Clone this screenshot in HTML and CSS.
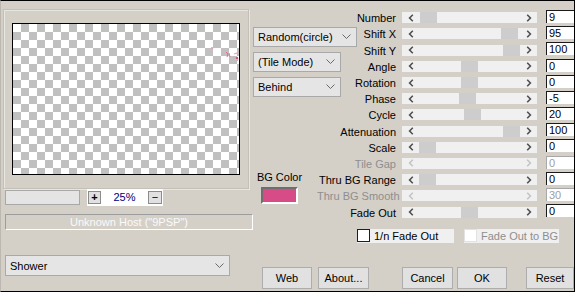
FILE: index.html
```html
<!DOCTYPE html>
<html>
<head>
<meta charset="utf-8">
<link rel="stylesheet" href="styles.css">
</head>
<body>
<div class="win">
  <div class="leftcol">
    <div class="group">
      <div class="canvas">
        <svg class="specks" width="40" height="20" viewBox="0 0 40 20">
          <path d="M12 5 L13 3 L14 5" stroke="#e89ab8" stroke-width="1" fill="none"/>
          <path d="M27 8 L29 10 L28 13 M30 9 L31 13" stroke="#e06a9a" stroke-width="1" fill="none"/>
          <path d="M35 10 L38 9 L39 12 M34 13 L39 15 L38 17" stroke="#e8a0bc" stroke-width="1.2" fill="none"/>
          <rect x="37" y="13" width="2" height="2" fill="#d84c88"/>
        </svg>
      </div>
    </div>
    <div class="zoomrow">
      <div class="status"></div>
      <div class="zoombox">
        <span class="zbtn">+</span>
        <span class="zval">25%</span>
        <span class="zbtn minus">&minus;</span>
      </div>
    </div>
    <div class="host">Unknown Host ("9PSP")</div>
    <div class="select shower">
      <span>Shower</span>
      <svg class="chev" width="9" height="5" viewBox="0 0 9 5"><path d="M0.5 0.5 L4.5 4.5 L8.5 0.5" stroke="#6a6a6a" fill="none"/></svg>
    </div>
  </div>

  <div class="rightcol">
    <div class="params">
      <div class="misc">
        <div class="select w104">
          <span>Random(circle)</span>
          <svg class="chev" width="9" height="5" viewBox="0 0 9 5"><path d="M0.5 0.5 L4.5 4.5 L8.5 0.5" stroke="#6a6a6a" fill="none"/></svg>
        </div>
        <div class="select w88">
          <span>(Tile Mode)</span>
          <svg class="chev" width="9" height="5" viewBox="0 0 9 5"><path d="M0.5 0.5 L4.5 4.5 L8.5 0.5" stroke="#6a6a6a" fill="none"/></svg>
        </div>
        <div class="select w88">
          <span>Behind</span>
          <svg class="chev" width="9" height="5" viewBox="0 0 9 5"><path d="M0.5 0.5 L4.5 4.5 L8.5 0.5" stroke="#6a6a6a" fill="none"/></svg>
        </div>
        <div class="bgcolor">
          <span class="bglabel">BG Color</span>
          <span class="swatch"></span>
        </div>
      </div>

      <div class="rows">
        <div class="row">
          <span class="lbl">Number</span>
          <div class="slider"><span class="arr"><svg width="6" height="8" viewBox="0 0 6 8"><path d="M4.8 0.8 L1.6 4 L4.8 7.2" stroke="#505050" stroke-width="1.6" fill="none"/></svg></span><span class="track"><span class="thumb" style="margin-left:1px"></span></span><span class="arr"><svg width="6" height="8" viewBox="0 0 6 8"><path d="M1.2 0.8 L4.4 4 L1.2 7.2" stroke="#505050" stroke-width="1.6" fill="none"/></svg></span></div>
          <span class="val">9</span>
        </div>
        <div class="row">
          <span class="lbl">Shift X</span>
          <div class="slider"><span class="arr"><svg width="6" height="8" viewBox="0 0 6 8"><path d="M4.8 0.8 L1.6 4 L4.8 7.2" stroke="#505050" stroke-width="1.6" fill="none"/></svg></span><span class="track"><span class="thumb" style="margin-left:82px"></span></span><span class="arr"><svg width="6" height="8" viewBox="0 0 6 8"><path d="M1.2 0.8 L4.4 4 L1.2 7.2" stroke="#505050" stroke-width="1.6" fill="none"/></svg></span></div>
          <span class="val">95</span>
        </div>
        <div class="row">
          <span class="lbl">Shift Y</span>
          <div class="slider"><span class="arr"><svg width="6" height="8" viewBox="0 0 6 8"><path d="M4.8 0.8 L1.6 4 L4.8 7.2" stroke="#505050" stroke-width="1.6" fill="none"/></svg></span><span class="track"><span class="thumb" style="margin-left:84px"></span></span><span class="arr"><svg width="6" height="8" viewBox="0 0 6 8"><path d="M1.2 0.8 L4.4 4 L1.2 7.2" stroke="#505050" stroke-width="1.6" fill="none"/></svg></span></div>
          <span class="val">100</span>
        </div>
        <div class="row">
          <span class="lbl">Angle</span>
          <div class="slider"><span class="arr"><svg width="6" height="8" viewBox="0 0 6 8"><path d="M4.8 0.8 L1.6 4 L4.8 7.2" stroke="#505050" stroke-width="1.6" fill="none"/></svg></span><span class="track"><span class="thumb" style="margin-left:42px"></span></span><span class="arr"><svg width="6" height="8" viewBox="0 0 6 8"><path d="M1.2 0.8 L4.4 4 L1.2 7.2" stroke="#505050" stroke-width="1.6" fill="none"/></svg></span></div>
          <span class="val">0</span>
        </div>
        <div class="row">
          <span class="lbl">Rotation</span>
          <div class="slider"><span class="arr"><svg width="6" height="8" viewBox="0 0 6 8"><path d="M4.8 0.8 L1.6 4 L4.8 7.2" stroke="#505050" stroke-width="1.6" fill="none"/></svg></span><span class="track"><span class="thumb" style="margin-left:42px"></span></span><span class="arr"><svg width="6" height="8" viewBox="0 0 6 8"><path d="M1.2 0.8 L4.4 4 L1.2 7.2" stroke="#505050" stroke-width="1.6" fill="none"/></svg></span></div>
          <span class="val">0</span>
        </div>
        <div class="row">
          <span class="lbl">Phase</span>
          <div class="slider"><span class="arr"><svg width="6" height="8" viewBox="0 0 6 8"><path d="M4.8 0.8 L1.6 4 L4.8 7.2" stroke="#505050" stroke-width="1.6" fill="none"/></svg></span><span class="track"><span class="thumb" style="margin-left:40px"></span></span><span class="arr"><svg width="6" height="8" viewBox="0 0 6 8"><path d="M1.2 0.8 L4.4 4 L1.2 7.2" stroke="#505050" stroke-width="1.6" fill="none"/></svg></span></div>
          <span class="val">-5</span>
        </div>
        <div class="row">
          <span class="lbl">Cycle</span>
          <div class="slider"><span class="arr"><svg width="6" height="8" viewBox="0 0 6 8"><path d="M4.8 0.8 L1.6 4 L4.8 7.2" stroke="#505050" stroke-width="1.6" fill="none"/></svg></span><span class="track"><span class="thumb" style="margin-left:45px"></span></span><span class="arr"><svg width="6" height="8" viewBox="0 0 6 8"><path d="M1.2 0.8 L4.4 4 L1.2 7.2" stroke="#505050" stroke-width="1.6" fill="none"/></svg></span></div>
          <span class="val">20</span>
        </div>
        <div class="row">
          <span class="lbl">Attenuation</span>
          <div class="slider"><span class="arr"><svg width="6" height="8" viewBox="0 0 6 8"><path d="M4.8 0.8 L1.6 4 L4.8 7.2" stroke="#505050" stroke-width="1.6" fill="none"/></svg></span><span class="track"><span class="thumb" style="margin-left:84px"></span></span><span class="arr"><svg width="6" height="8" viewBox="0 0 6 8"><path d="M1.2 0.8 L4.4 4 L1.2 7.2" stroke="#505050" stroke-width="1.6" fill="none"/></svg></span></div>
          <span class="val">100</span>
        </div>
        <div class="row">
          <span class="lbl">Scale</span>
          <div class="slider"><span class="arr"><svg width="6" height="8" viewBox="0 0 6 8"><path d="M4.8 0.8 L1.6 4 L4.8 7.2" stroke="#505050" stroke-width="1.6" fill="none"/></svg></span><span class="track"><span class="thumb" style="margin-left:0px"></span></span><span class="arr"><svg width="6" height="8" viewBox="0 0 6 8"><path d="M1.2 0.8 L4.4 4 L1.2 7.2" stroke="#505050" stroke-width="1.6" fill="none"/></svg></span></div>
          <span class="val">0</span>
        </div>
        <div class="row off">
          <span class="lbl">Tile Gap</span>
          <div class="slider"><span class="arr"><svg width="6" height="8" viewBox="0 0 6 8"><path d="M4.8 0.8 L1.6 4 L4.8 7.2" stroke="#c4c4c4" stroke-width="1.6" fill="none"/></svg></span><span class="track"></span><span class="arr"><svg width="6" height="8" viewBox="0 0 6 8"><path d="M1.2 0.8 L4.4 4 L1.2 7.2" stroke="#c4c4c4" stroke-width="1.6" fill="none"/></svg></span></div>
          <span class="val">0</span>
        </div>
        <div class="row">
          <span class="lbl">Thru BG Range</span>
          <div class="slider"><span class="arr"><svg width="6" height="8" viewBox="0 0 6 8"><path d="M4.8 0.8 L1.6 4 L4.8 7.2" stroke="#505050" stroke-width="1.6" fill="none"/></svg></span><span class="track"><span class="thumb" style="margin-left:0px"></span></span><span class="arr"><svg width="6" height="8" viewBox="0 0 6 8"><path d="M1.2 0.8 L4.4 4 L1.2 7.2" stroke="#505050" stroke-width="1.6" fill="none"/></svg></span></div>
          <span class="val">0</span>
        </div>
        <div class="row off">
          <span class="lbl">Thru BG Smooth</span>
          <div class="slider"><span class="arr"><svg width="6" height="8" viewBox="0 0 6 8"><path d="M4.8 0.8 L1.6 4 L4.8 7.2" stroke="#c4c4c4" stroke-width="1.6" fill="none"/></svg></span><span class="track"></span><span class="arr"><svg width="6" height="8" viewBox="0 0 6 8"><path d="M1.2 0.8 L4.4 4 L1.2 7.2" stroke="#c4c4c4" stroke-width="1.6" fill="none"/></svg></span></div>
          <span class="val">30</span>
        </div>
        <div class="row">
          <span class="lbl">Fade Out</span>
          <div class="slider"><span class="arr"><svg width="6" height="8" viewBox="0 0 6 8"><path d="M4.8 0.8 L1.6 4 L4.8 7.2" stroke="#505050" stroke-width="1.6" fill="none"/></svg></span><span class="track"><span class="thumb" style="margin-left:42px"></span></span><span class="arr"><svg width="6" height="8" viewBox="0 0 6 8"><path d="M1.2 0.8 L4.4 4 L1.2 7.2" stroke="#505050" stroke-width="1.6" fill="none"/></svg></span></div>
          <span class="val">0</span>
        </div>
      </div>
    </div>

    <div class="checks">
      <div class="chk c1"><span class="box"></span><span>1/n Fade Out</span></div>
      <div class="chk c2 off"><span class="box"></span><span>Fade Out to BG</span></div>
    </div>

    <div class="buttons">
      <div class="btn b-web">Web</div>
      <div class="btn b-about">About...</div>
      <div class="btn b-cancel">Cancel</div>
      <div class="btn b-ok">OK</div>
      <div class="btn b-reset">Reset</div>
    </div>
  </div>
</div>
</body>
</html>
```

FILE: styles.css
```css
* { box-sizing: border-box; }
html, body { margin: 0; padding: 0; }
body {
  width: 575px;
  height: 292px;
  overflow: hidden;
  background: #d4d0c8;
  font-family: "Liberation Sans", Arial, sans-serif;
  font-size: 11px;
  color: #000;
}
.win {
  width: 575px;
  height: 292px;
  display: flex;
  background: #d4d0c8;
  border-top: 1px solid #000;
  border-right: 1px solid #000;
  border-bottom: 1px solid #000;
  border-left: 1px solid #bcb8b0;
}

/* ---------- left column ---------- */
.leftcol {
  width: 252px;
  flex: none;
  padding: 8px 0 0 2px;
  display: flex;
  flex-direction: column;
  align-items: flex-start;
}
.group {
  width: 246px;
  height: 180px;
  border: 1px solid #c4c0b8;
  box-shadow: inset 1px 1px 0 #e8e6e1, 1px 1px 0 #e8e6e1;
  padding: 13px 0 0 8px;
}
.canvas {
  position: relative;
  width: 228px;
  height: 152px;
  border: 1px solid #000;
  background-color: #fff;
  background-image: conic-gradient(#c0c0c0 25%, #fff 0 50%, #c0c0c0 0 75%, #fff 0);
  background-size: 16px 16px;
}
.specks {
  position: absolute;
  top: 20px;
  right: 0;
}
.zoomrow {
  display: flex;
  align-items: flex-start;
}
.status {
  margin-top: 1px;
  margin-left: 2px;
  width: 75px;
  height: 15px;
  background: #e4e4e4;
  border: 1px solid #a8a8a8;
}
.zoombox {
  margin-left: 7px;
  width: 76px;
  height: 17px;
  background: #fff;
  display: flex;
  align-items: center;
  padding: 0 1px;
}
.zbtn {
  width: 13px;
  height: 13px;
  border: 1px solid #8c8c8c;
  background: #e1e1e1;
  display: flex;
  align-items: center;
  justify-content: center;
  font-weight: bold;
  font-size: 11px;
  line-height: 1;
}
.zbtn.minus { width: 14px; font-weight: normal; }
.zval {
  flex: 1;
  text-align: center;
  color: #000080;
  font-size: 11px;
  line-height: 13px;
}
.host {
  margin-top: 8px;
  margin-left: 2px;
  width: 248px;
  height: 16px;
  border: 1px solid;
  border-color: #9c9c9c #fff #fff #9c9c9c;
  color: #fafafa;
  text-align: center;
  font-size: 11px;
  line-height: 14px;
  white-space: nowrap;
}
.select {
  height: 20px;
  border: 1px solid #a9a9a9;
  background: #e5e5e5;
  display: flex;
  align-items: center;
  justify-content: space-between;
  padding: 0 5px 0 4px;
  font-size: 11px;
  white-space: nowrap;
}
.chev { flex: none; }
.shower {
  margin-top: 25px;
  margin-left: 2px;
  width: 225px;
  height: 21px;
  padding-right: 5px;
}
.w104 { width: 104px; }
.w88 { width: 88px; }

/* ---------- right column ---------- */
.rightcol {
  flex: 1;
  padding-top: 8.7px;
  display: flex;
  flex-direction: column;
}
.params { display: flex; }
.misc {
  width: 64px;
  flex: none;
  padding-top: 17.3px;
  display: flex;
  flex-direction: column;
  align-items: flex-start;
  gap: 5px;
}
.bgcolor {
  margin-top: 69px;
  margin-left: 6px;
  width: 41px;
  display: flex;
  flex-direction: column;
  align-items: center;
}
.bglabel {
  line-height: 13px;
  font-size: 11px;
  white-space: nowrap;
}
.swatch {
  margin-top: 3px;
  width: 37px;
  height: 17px;
  background: #d74b87;
  border: 2px solid;
  border-color: #6e6e6e #fff #fff #6e6e6e;
}
.rows {
  display: flex;
  flex-direction: column;
}
.row {
  height: 16.2px;
  display: flex;
  align-items: center;
}
.lbl {
  width: 79px;
  text-align: right;
  white-space: nowrap;
  line-height: 14px;
  padding-top: 1px;
  font-size: 11px;
}
.slider {
  margin-left: 6px;
  width: 135px;
  height: 11px;
  display: flex;
  background: #f0f0f0;
}
.arr {
  width: 17px;
  flex: none;
  display: flex;
  align-items: center;
  justify-content: center;
}
.track {
  flex: 1;
  display: flex;
}
.thumb {
  width: 17px;
  height: 11px;
  background: #cdcdcd;
}
.val {
  margin-left: 9px;
  align-self: flex-start;
  margin-top: 0.3px;
  width: 28px;
  height: 13px;
  background: #fff;
  border-top: 1px solid #1a1a1a;
  border-left: 1px solid #1a1a1a;
  padding-left: 2px;
  font-size: 11px;
  line-height: 12px;
}
.row.off .lbl { color: #8e8e8e; }
.row.off .val { color: #a0a0a0; border-color: #a8a8a8; }

.checks {
  margin-top: 8.7px;
  margin-left: 104px;
  display: flex;
  gap: 10px;
  height: 14px;
}
.chk {
  display: flex;
  align-items: center;
  height: 14px;
  background: #f0f0f0;
  white-space: nowrap;
  font-size: 11px;
}
.c1 { width: 97px; }
.c2 { width: 95px; }
.box {
  width: 13px;
  height: 13px;
  background: #fff;
  border: 1px solid #1e1e1e;
  margin-right: 4px;
  flex: none;
}
.chk.off { color: #8e8e8e; }
.chk.off .box { border-color: #e2e2e2; }

.buttons {
  margin-top: 24px;
  margin-left: 9px;
  display: flex;
}
.btn {
  height: 22px;
  border: 1px solid #adadad;
  background: #e1e1e1;
  display: flex;
  align-items: center;
  justify-content: center;
  font-size: 11px;
}
.b-web { width: 50px; }
.b-about { width: 51px; margin-left: 6px; }
.b-cancel { width: 51px; margin-left: 33px; }
.b-ok { width: 50px; margin-left: 4px; }
.b-reset { width: 48px; margin-left: 19px; }
```
